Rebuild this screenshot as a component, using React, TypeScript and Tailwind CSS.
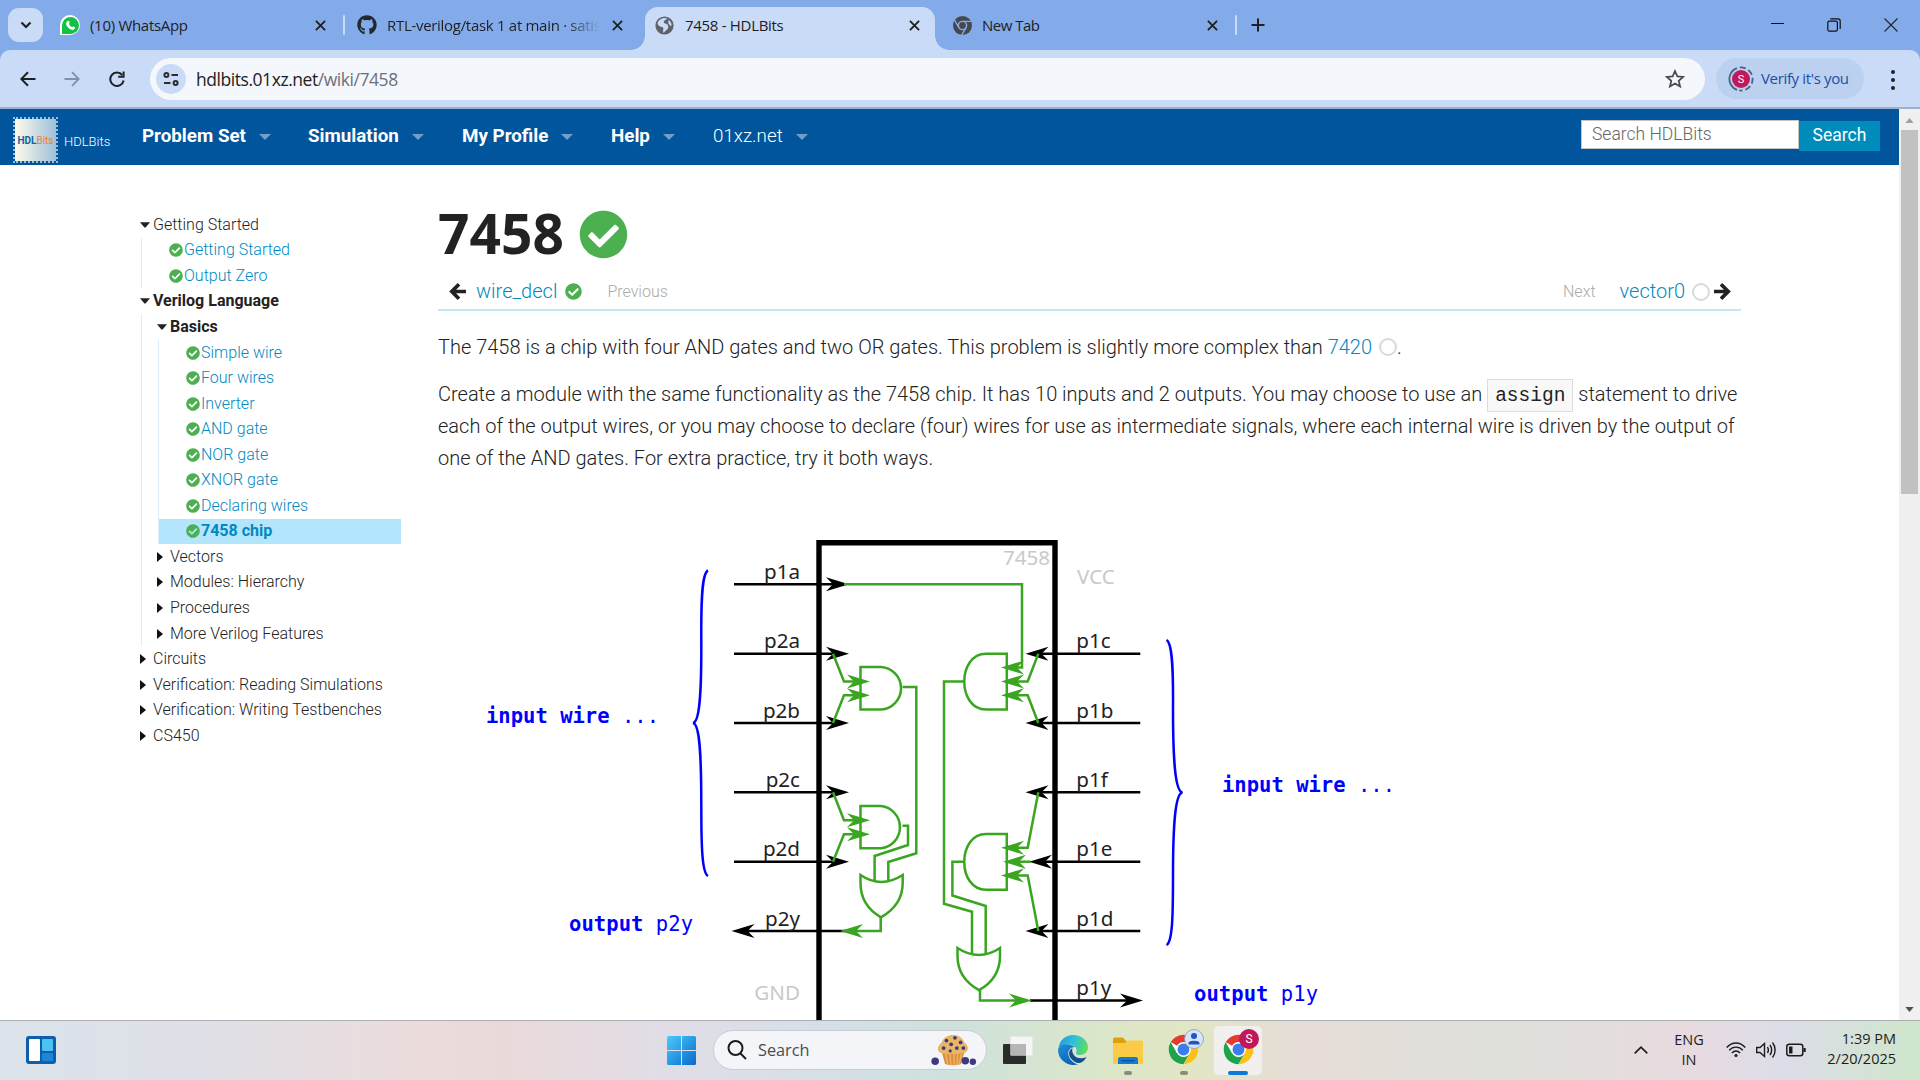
import React from "react";
import { FaCheckCircle, FaGithub, FaWhatsapp } from "react-icons/fa";

function Check({ className }: { className: string }) {
  return <FaCheckCircle className={"shrink-0 text-[#4caf50] " + className} />;
}

function CloseX({ className = "" }: { className?: string }) {
  return (
    <svg viewBox="0 0 12 12" className={"h-[11px] w-[11px] shrink-0 " + className} stroke="#1f2023" strokeWidth="2">
      <path d="M1 1 L11 11 M11 1 L1 11" />
    </svg>
  );
}

function ChromeMono() {
  return (
    <svg viewBox="0 0 24 24" className="h-[19px] w-[19px] shrink-0">
      <circle cx="12" cy="12" r="12" fill="#45484d" />
      <circle cx="12" cy="12" r="5.2" fill="none" stroke="#84abe9" strokeWidth="1.8" />
      <path d="M12 6.8 H23 M7.5 14.6 L2 5.2 M16.5 14.6 L11 24" stroke="#84abe9" strokeWidth="1.8" />
    </svg>
  );
}

function TabStrip() {
  return (
    <div className="flex h-[50px] shrink-0 bg-[#84abe9] text-[15px] text-[#1f2023]">
      <div className="mt-[8px] ml-[8px] flex h-[34px] w-[35px] items-center justify-center rounded-[11px] bg-[#c9dbf6]">
        <svg viewBox="0 0 12 8" className="h-[8px] w-[12px]" fill="none" stroke="#1f2023" strokeWidth="2.2">
          <path d="M1.5 1.5 L6 6 L10.5 1.5" />
        </svg>
      </div>
      <div className="ml-[17px] flex h-[50px] w-[283px] items-center">
        <div className="flex h-[20px] w-[20px] shrink-0 items-center justify-center rounded-full rounded-bl-[3px] bg-white">
          <div className="flex h-[17px] w-[17px] items-center justify-center rounded-full rounded-bl-[3px] bg-[#14c143]">
            <svg viewBox="0 0 12 12" className="h-[11px] w-[11px]" fill="#fff">
              <path d="M3.300 1 C3.800 0.700 4.300 0.900 4.500 1.400 L5 2.900 C5.200 3.500 4.300 4 4.400 4.400 C5 5.900 6 7 7.600 7.600 C8 7.700 8.400 6.800 9 7 L10.500 7.600 C11 7.800 11.200 8.300 11 8.800 C10.400 10.500 8.800 11.200 7.200 10.700 C4.500 9.800 2.200 7.500 1.300 4.800 C0.900 3.200 1.700 1.600 3.300 1 Z" />
            </svg>
          </div>
        </div>
        <span className="ml-[10px] tracking-[-0.3px]">(10) WhatsApp</span>
        <CloseX className="mr-[17px] ml-auto" />
      </div>
      <div className="mt-[15px] h-[20px] w-[2px] rounded bg-[#c9dbf6]" />
      <div className="flex h-[50px] w-[300px] items-center">
        <FaGithub className="ml-[12px] h-[20px] w-[20px] shrink-0 text-[#24292e]" />
        <div className="ml-[10px] w-[211px] overflow-hidden whitespace-nowrap [mask-image:linear-gradient(to_right,black_178px,transparent_213px)]">
          <span className="tracking-[-0.3px]">RTL-verilog/task 1 at main · satis</span>
        </div>
        <CloseX className="ml-[14px]" />
      </div>
      <div className="relative mt-[7px] flex h-[43px] w-[290px] items-center rounded-t-[13px] bg-[#c9dbf6] pb-[7px]">
        <div className="absolute bottom-0 left-[-14px] h-[14px] w-[14px] bg-[radial-gradient(circle_at_0_0,#84abe9_13.5px,#c9dbf6_14px)]" />
        <div className="absolute right-[-14px] bottom-0 h-[14px] w-[14px] bg-[radial-gradient(circle_at_100%_0,#84abe9_13.5px,#c9dbf6_14px)]" />
        <svg viewBox="0 0 24 24" className="ml-[10px] h-[19px] w-[19px] shrink-0">
          <circle cx="12" cy="12" r="11.5" fill="#5f6368" />
          <path d="M3.500 7.500 C7 2 13 1.500 15.500 3.500 C13 5 9.500 6.500 12 9 C15 9.500 18 11.500 16.500 15 C15.500 18 12 18.500 11 21.500 C9 18.500 12 16.500 9.500 14 C6.500 13.500 2.500 12 3.500 7.500 Z M17.500 5 C20.500 7 21.500 11 20.500 13 C18 11 15.500 9 17.500 5 Z" fill="#c9dbf6" />
        </svg>
        <span className="ml-[11px] tracking-[-0.3px]">7458 - HDLBits</span>
        <CloseX className="mr-[15px] ml-auto" />
      </div>
      <div className="flex h-[50px] w-[300px] items-center">
        <div className="ml-[18px]">
          <ChromeMono />
        </div>
        <span className="ml-[10px] tracking-[-0.5px]">New Tab</span>
        <CloseX className="mr-[17px] ml-auto" />
      </div>
      <div className="mt-[15px] h-[20px] w-[2px] rounded bg-[#c9dbf6]" />
      <svg viewBox="0 0 14 14" className="mt-[18px] ml-[14px] h-[14px] w-[14px]" stroke="#1f2023" strokeWidth="2">
        <path d="M7 0.5 V13.5 M0.5 7 H13.5" />
      </svg>
      <div className="mr-[22px] ml-auto flex h-[50px] items-center gap-[43px]">
        <svg viewBox="0 0 14 14" className="h-[14px] w-[14px]" stroke="#111" strokeWidth="1">
          <path d="M1 5.5 H14" />
        </svg>
        <svg viewBox="0 0 14 14" className="h-[14px] w-[14px]" fill="none" stroke="#111" strokeWidth="1.2">
          <rect x="0.8" y="3.2" width="9.6" height="10" rx="1.6" />
          <path d="M3.2 0.8 H11 C12.4 0.8 13.2 1.6 13.2 3 V11" />
        </svg>
        <svg viewBox="0 0 14 14" className="h-[14px] w-[14px]" stroke="#222" strokeWidth="1.1">
          <path d="M0.5 0.5 L13.5 13.5 M13.5 0.5 L0.5 13.5" />
        </svg>
      </div>
    </div>
  );
}

function Toolbar() {
  return (
    <div className="h-[57px] shrink-0 bg-[#84abe9]">
      <div className="flex h-[57px] rounded-t-[10px] bg-[#c9dbf6] pt-[8px]">
        <div className="flex h-[41px] w-[150px] items-center">
          <svg viewBox="0 0 16 16" className="ml-[20px] h-[16px] w-[16px]" fill="none" stroke="#1f2023" strokeWidth="2">
            <path d="M15.5 8 H1.5 M8 1.2 L1.3 8 L8 14.8" />
          </svg>
          <svg viewBox="0 0 16 16" className="ml-[28px] h-[16px] w-[16px]" fill="none" stroke="#8391a8" strokeWidth="1.8">
            <path d="M0.5 8 H14.5 M8 1.2 L14.7 8 L8 14.8" />
          </svg>
          <svg viewBox="0 0 16 16" className="ml-[29px] h-[16px] w-[16px]" fill="none" stroke="#1f2023" strokeWidth="2">
            <path d="M14.6 9.5 A6.7 6.7 0 1 1 13.2 4" />
            <path d="M14.6 0.6 V5.8 H9.2" />
          </svg>
        </div>
        <div className="flex h-[42px] w-[1555px] items-center rounded-full bg-[#f4f7fc]">
          <div className="ml-[6px] flex h-[30px] w-[30px] items-center justify-center rounded-full bg-[#c9dbf6]">
            <svg viewBox="0 0 16 14" className="h-[14px] w-[16px]" fill="none" stroke="#2b2d31" strokeWidth="2">
              <circle cx="3.4" cy="3" r="2" />
              <path d="M8.5 3 H15 M1 11 H7.5" />
              <circle cx="12.6" cy="11" r="2" />
            </svg>
          </div>
          <span className="ml-[10px] text-[17.5px] tracking-[-0.45px] text-[#1f2023]">
            hdlbits.01xz.net<span className="text-[#6b7077]">/wiki/7458</span>
          </span>
          <svg viewBox="0 0 20 20" className="mr-[20px] ml-auto h-[20px] w-[20px]" fill="none" stroke="#46494e" strokeWidth="1.7">
            <path d="M10 2 L12.3 7.4 L18.2 7.9 L13.7 11.8 L15.1 17.5 L10 14.4 L4.9 17.5 L6.3 11.8 L1.8 7.9 L7.7 7.4 Z" />
          </svg>
        </div>
        <div className="ml-[11px] flex h-[41px] w-[148px] items-center rounded-full bg-[#bcd0f0]">
          <svg viewBox="0 0 26 26" className="ml-[12px] h-[26px] w-[26px]">
            <circle cx="13" cy="13" r="11.6" fill="none" stroke="#4a6286" strokeWidth="1.8" strokeDasharray="28 3 6 3 6 3 6 3 6 3 3 3" transform="rotate(110 13 13)" />
            <circle cx="13" cy="13" r="9" fill="#c2185b" />
            <text x="13" y="17" textAnchor="middle" fontSize="11" fill="#fff" fontFamily="Roboto">S</text>
          </svg>
          <span className="ml-[7px] text-[15px] tracking-[-0.35px] whitespace-nowrap text-[#1d4fa3]">Verify it's you</span>
        </div>
        <div className="mt-[12px] ml-[27px] flex flex-col gap-[4px]">
          <div className="h-[4px] w-[4px] rounded-full bg-[#1f2023]" />
          <div className="h-[4px] w-[4px] rounded-full bg-[#1f2023]" />
          <div className="h-[4px] w-[4px] rounded-full bg-[#1f2023]" />
        </div>
      </div>
    </div>
  );
}

function Caret() {
  return (
    <svg viewBox="0 0 12 6" className="h-[6px] w-[12px] shrink-0" fill="#6f9fca">
      <path d="M0 0 H12 L6 6 Z" />
    </svg>
  );
}

function NavItem({ label, width, className }: { label: string; width: string; className: string }) {
  return (
    <div className={"flex items-center " + width}>
      <span className={"mr-[13px] whitespace-nowrap " + className}>{label}</span>
      <Caret />
    </div>
  );
}

function SiteNav() {
  return (
    <div className="flex h-[56px] shrink-0 bg-[#00559c] font-[Roboto] text-white">
      <div className="mt-[8px] ml-[13px] flex h-[46px] w-[45px] shrink-0 items-center justify-center border-2 border-dotted border-[#9dbbd3] bg-[linear-gradient(to_right,#fdfbea,#9fc0da)] bg-clip-padding text-[10px] font-bold">
        <span className="text-[#14639d]">HDL</span>
        <span className="font-normal text-[#e8822c]">Bits</span>
      </div>
      <span className="mt-[22px] ml-[6px] w-[78px] shrink-0 text-[13px] leading-[21px] font-light">HDLBits</span>
      <div className="flex h-[55px] items-center">
        <NavItem label="Problem Set" width="w-[166px]" className="text-[18.8px] font-bold" />
        <NavItem label="Simulation" width="w-[154px]" className="text-[18.8px] font-bold" />
        <NavItem label="My Profile" width="w-[149px]" className="text-[18.8px] font-bold" />
        <NavItem label="Help" width="w-[102px]" className="text-[18.8px] font-bold" />
        <NavItem label="01xz.net" width="w-[120px]" className="text-[18.8px] font-light" />
      </div>
      <div className="mt-[11px] mr-[19px] ml-auto flex">
        <div className="flex h-[29px] w-[218px] items-center border border-[#c4c4c4] bg-white pl-[10px] text-[17.5px] font-light text-[#666]">
          Search HDLBits
        </div>
        <div className="mt-px flex h-[30px] w-[81px] items-center justify-center bg-[#008cba] pb-[2px] text-[17.5px]">
          Search
        </div>
      </div>
    </div>
  );
}

function Down() {
  return (
    <svg viewBox="0 0 10 6" className="mr-[3px] ml-px h-[6px] w-[10px] shrink-0" fill="#222">
      <path d="M0 0.3 H10 L5.6 5.5 H4.4 Z" />
    </svg>
  );
}

function Right() {
  return (
    <svg viewBox="0 0 6 10" className="mr-[7px] h-[10px] w-[6px] shrink-0" fill="#111">
      <path d="M0 0 L6 5 L0 10 Z" />
    </svg>
  );
}

const row = "flex h-[25.55px] items-center whitespace-nowrap ";

function Leaf({ label, active = false }: { label: string; active?: boolean }) {
  return (
    <div className={row + (active ? "bg-[#b3e5fc] font-bold text-[#0288bf]" : "text-[#0288bf]")}>
      <Check className="mr-px ml-[27px] h-[14px] w-[14px]" />
      {label}
    </div>
  );
}

const basics = ["Simple wire", "Four wires", "Inverter", "AND gate", "NOR gate", "XNOR gate", "Declaring wires"];
const verilogGroups = ["Vectors", "Modules: Hierarchy", "Procedures", "More Verilog Features"];
const topGroups = ["Circuits", "Verification: Reading Simulations", "Verification: Writing Testbenches", "CS450"];

function Sidebar() {
  return (
    <div className="mt-[47px] ml-[139px] w-[262px] shrink-0 font-[Roboto] text-[16px] font-light text-[#222]">
      <div className={row}>
        <Down />
        Getting Started
      </div>
      <div className="ml-[2px] border-l border-[#d8effa]">
        <Leaf label="Getting Started" />
        <Leaf label="Output Zero" />
      </div>
      <div className={row + "font-bold"}>
        <Down />
        Verilog Language
      </div>
      <div className="ml-[2px] border-l border-[#d8effa]">
        <div className={row + "pl-[14px] font-bold"}>
          <Down />
          Basics
        </div>
        <div className="ml-[16px] border-l border-[#d8effa]">
          {basics.map((b) => (
            <Leaf key={b} label={b} />
          ))}
          <Leaf label="7458 chip" active />
        </div>
        {verilogGroups.map((g) => (
          <div key={g} className={row + "pl-[15px]"}>
            <Right />
            {g}
          </div>
        ))}
      </div>
      {topGroups.map((g) => (
        <div key={g} className={row + "pl-px"}>
          <Right />
          {g}
        </div>
      ))}
    </div>
  );
}

type Pt = [number, number];

function Head({ tip, dir, fill }: { tip: Pt; dir: 1 | -1; fill: string }) {
  const [x, y] = tip;
  const b = x - 23 * dir;
  return <path d={`M${x} ${y} L${b} ${y - 7} L${b + 7 * dir} ${y} L${b} ${y + 7} Z`} fill={fill} />;
}

const G = "#3aa520";
const leftPins: [string, number][] = [["p1a", 584.3], ["p2a", 653.7], ["p2b", 723], ["p2c", 792.3], ["p2d", 861.7]];
const rightPins: [string, number, number][] = [["p1c", 653.7, 1025.5], ["p1b", 723, 1025.5], ["p1f", 792.3, 1025.5], ["p1e", 861.7, 1029], ["p1d", 931, 1025.5]];
const greenHeads: [number, number, 1 | -1][] = [
  [870, 681.5, 1], [870, 695.3, 1], [870, 820.3, 1], [870, 834.2, 1],
  [1001, 667.5, -1], [1001, 681.5, -1], [1001, 695.3, -1],
  [1001, 847.8, -1], [1003, 861.7, -1], [1001, 875.5, -1],
  [840, 931, -1], [1032, 1000.5, 1],
];
const greenPaths = [
  "M844 584.3 H1022 V667.5 H1012",
  "M833 653.7 L844 681.5 H856", "M833 723 L844 695.3 H856",
  "M833 792.3 L844 820.3 H856", "M833 861.7 L844 834.2 H856",
  "M860.5 667 H881 A21.5 21.3 0 0 1 881 709.5 H860.5 Z",
  "M860.5 806 H881 A21.5 21.3 0 0 1 881 848.3 H860.5 Z",
  "M902.5 687 H916.3 V853.3 L888.3 862 V881",
  "M902.5 825.7 H908 V845 L874.6 856 V881",
  "M860.5 875 Q881 889 902.7 875 V883 C902.7 900 892 911 881 917.3 C870 911 860.5 900 860.5 883 Z",
  "M880.7 917 V931 H852",
  "M1006.8 653.7 H986 C957 653.7 957 709.5 986 709.5 H1006.8 Z",
  "M1006.8 834 H986 C957 834 957 889.8 986 889.8 H1006.8 Z",
  "M964.3 681.5 H944 V903.7 L972 911.8 V954",
  "M964.3 861.7 H952.4 V895.5 L985.7 906 V954",
  "M957.5 948 Q979 962 1000 948 V956 C1000 973 990 984 979 990.2 C968 984 957.5 973 957.5 956 Z",
  "M980 990 V1000.5 H1020",
  "M1038.3 653.7 L1027.7 681.5 H1012", "M1038.3 723 L1027.7 695.3 H1012",
  "M1038.3 792.3 L1027.7 847.8 H1012", "M1038.3 931 L1027.7 875.5 H1012", "M1031 861.7 H1016",
];

function ChipDiagram() {
  return (
    <svg viewBox="438 530 1303 490" className="mt-[56px] block h-[490px] w-[1303px] shrink-0 font-normal">
      <path d="M819 1030 V542.7 H1055 V1030" fill="none" stroke="#000" strokeWidth="5.4" />
      <g stroke="#000" strokeWidth="2.6">
        {leftPins.map(([n, y]) => <path key={n} d={`M734 ${y} H835`} />)}
        {rightPins.map(([n, y, t]) => <path key={n} d={`M1140.3 ${y} H${t + 12}`} />)}
        <path d="M745 931 H848 M1030 1000.5 H1130" />
      </g>
      {leftPins.map(([n, y]) => <Head key={n} tip={[849, y]} dir={1} fill="#000" />)}
      {rightPins.map(([n, y, t]) => <Head key={n} tip={[t, y]} dir={-1} fill="#000" />)}
      <Head tip={[731.5, 931]} dir={-1} fill="#000" />
      <Head tip={[1143, 1000.5]} dir={1} fill="#000" />
      <g fill="none" stroke={G} strokeWidth="2.5">
        {greenPaths.map((d) => <path key={d} d={d} />)}
      </g>
      {greenHeads.map(([x, y, d]) => <Head key={`${x}-${y}`} tip={[x, y]} dir={d} fill={G} />)}
      <g fontFamily="Noto Sans" fontSize="20.6" fill="#222">
        {leftPins.map(([n, y]) => <text key={n} x="800" y={y - 5.3} textAnchor="end">{n}</text>)}
        {rightPins.map(([n, y]) => <text key={n} x="1076.3" y={y - 5.3}>{n}</text>)}
        <text x="800" y="925.7" textAnchor="end">p2y</text>
        <text x="1076.3" y="995.2">p1y</text>
      </g>
      <g fontFamily="Noto Sans" fontSize="20.6" fill="#c9c9c9">
        <text x="1050" y="565" textAnchor="end">7458</text>
        <text x="1077" y="584.3">VCC</text>
        <text x="800" y="1000.3" textAnchor="end">GND</text>
      </g>
      <g fontFamily="DejaVu Sans Mono" fontSize="20.5" fill="#00f" className="whitespace-pre">
        <text x="486" y="723" textLength="173"><tspan fontWeight="bold">input wire</tspan> ...</text>
        <text x="569" y="931" textLength="124"><tspan fontWeight="bold">output</tspan> p2y</text>
        <text x="1222" y="792.3" textLength="173"><tspan fontWeight="bold">input wire</tspan> ...</text>
        <text x="1194" y="1000.5" textLength="124"><tspan fontWeight="bold">output</tspan> p1y</text>
      </g>
      <g fill="none" stroke="#00f" strokeWidth="2.5">
        <path d="M708 570.5 C702 573 701 600 701.3 640 C701.5 690 700 722 693 723 C700 724 701.3 757 701.3 806 C701.3 846 702 873 708 876" />
        <path d="M1166.5 640 C1172.5 643 1173.3 670 1173 709 C1173 759 1175 791.5 1182.5 792.5 C1175 793.5 1173 826 1173 876 C1173 916 1172.5 942 1166.5 945" />
      </g>
    </svg>
  );
}

function Ring({ className = "" }: { className?: string }) {
  return <span className={"inline-block h-[18px] w-[18px] shrink-0 rounded-full border-2 border-[#dadada] " + className} />;
}

function BoldArrow({ className }: { className: string }) {
  return (
    <svg viewBox="0 0 17 17" className={"h-[17px] w-[17px] shrink-0 " + className} fill="none" stroke="#222" strokeWidth="3.700">
      <path d="M17 8.500 H3 M10 1.300 L2.800 8.500 L10 15.700" />
    </svg>
  );
}

function Article() {
  return (
    <div className="ml-[37px] flex w-[1303px] flex-col font-[Roboto] text-[20px] leading-[32px] font-light text-[#222]">
      <div className="mt-[29px] flex h-[80px] items-center">
        <h1 className="pb-[2px] font-['Noto_Sans'] text-[55px] font-bold">7458</h1>
        <Check className="ml-[15px] h-[49px] w-[49px]" />
      </div>
      <div className="flex h-[37px] shrink-0 items-center border-b-2 border-[#c3e8f2]">
        <BoldArrow className="ml-[11px]" />
        <span className="-mt-[2px] ml-[10px] text-[#0288bf]">wire_decl</span>
        <Check className="ml-[8px] h-[17px] w-[17px]" />
        <span className="ml-[25px] text-[16px] text-[#aaa]">Previous</span>
        <span className="mr-[24px] ml-auto text-[16px] text-[#aaa]">Next</span>
        <span className="-mt-[2px] text-[#0288bf]">vector0</span>
        <Ring className="ml-[7px]" />
        <BoldArrow className="mr-[10px] ml-[4px] rotate-180" />
      </div>
      <p className="mt-[20px] flex items-center whitespace-pre">
        <span>The 7458 is a chip with four AND gates and two OR gates. This problem is slightly more complex than <span className="text-[#0288bf]">7420</span></span>
        <Ring className="ml-[7px]" />.
      </p>
      <div className="mt-[15px] whitespace-nowrap">
        <p className="h-[32px]">
          Create a module with the same functionality as the 7458 chip. It has 10 inputs and 2 outputs. You may choose to use an{" "}
          <code className="border border-[#dcdcdc] bg-[#f8f8f8] px-[7px] pt-[5px] pb-[4px] font-['Liberation_Mono'] text-[19.5px] font-light text-[#222]">assign</code> statement to drive
        </p>
        <p>each of the output wires, or you may choose to declare (four) wires for use as intermediate signals, where each internal wire is driven by the output of</p>
        <p>one of the AND gates. For extra practice, try it both ways.</p>
      </div>
      <ChipDiagram />
    </div>
  );
}

function Scrollbar() {
  return (
    <div className="ml-auto flex w-[21px] shrink-0 flex-col items-center bg-[#f0f0f0]">
      <svg viewBox="0 0 10 6" className="mt-[9px] h-[5px] w-[9px]" fill="#a0a0a0"><path d="M0 6 L5 0 L10 6 Z" /></svg>
      <div className="mt-[7px] h-[364px] w-[17px] bg-[#c1c1c1]" />
      <svg viewBox="0 0 10 6" className="mt-auto mb-[8px] h-[5px] w-[9px]" fill="#505050"><path d="M0 0 L5 6 L10 0 Z" /></svg>
    </div>
  );
}

function Chrome() {
  return (
    <svg viewBox="0 0 48 48" className="h-[31px] w-[31px] shrink-0">
      <circle cx="24" cy="24" r="23" fill="#fff" />
      <path d="M24 24 L4.1 12.5 A23 23 0 0 1 43.9 12.5 H24 Z" fill="#e33b2e" />
      <path d="M4.1 12.5 A23 23 0 0 0 24 47 L34 29.7 L24 24 L14 29.7 Z" fill="#1fa34a" />
      <path d="M43.9 12.5 A23 23 0 0 1 24 47 L34 29.7 L33.9 18.2 L24 12.5 Z" fill="#fbc116" />
      <circle cx="24" cy="24" r="11.5" fill="#fff" />
      <circle cx="24" cy="24" r="9.2" fill="#3b7ded" />
    </svg>
  );
}

function Muffin() {
  return (
    <svg viewBox="0 0 48 34" className="h-[32px] w-[48px]">
      <path d="M11 19 H35 L31.5 32 Q23 34.5 14.5 32 Z" fill="#d9903f" />
      <path d="M15 21 L17.5 32 M19.5 21 L21 33 M24 21 V33 M28 21 L27 33 M32 21 L29.5 32" stroke="#f0b76a" strokeWidth="1.4" />
      <path d="M8 19 C5 14 9 11 11 9 C13 3 18 1 23 1 C29 1 33 4 35 9 C39 12 40 16 37 19 C33 22 13 22 8 19 Z" fill="#e9b566" />
      <g fill="#3e3a80">
        <circle cx="16" cy="7" r="2" /><circle cx="25" cy="4" r="2" /><circle cx="31" cy="9" r="2" /><circle cx="21" cy="11" r="2" />
        <circle cx="13" cy="15" r="2" /><circle cx="27" cy="15" r="2" /><circle cx="34" cy="15" r="2" /><circle cx="20" cy="18" r="1.7" />
        <circle cx="4" cy="29" r="4" /><circle cx="36" cy="28.5" r="4" /><circle cx="44" cy="29.5" r="3.4" />
      </g>
    </svg>
  );
}

function Taskbar() {
  return (
    <div className="flex h-[60px] shrink-0 border-t border-[#adaeb1] bg-[linear-gradient(to_right,#dbe3ea_0%,#dfe0e8_10%,#ecdcdc_22%,#ead9d9_26%,#e2dde6_34%,#d5dfe8_43%,#cde2dd_49%,#dce7c8_58%,#e2e6c4_62%,#e6dcd8_68%,#dfe0da_78%,#e8dbe0_88%,#dcdde8_93%,#cfe6cb_100%)] text-[15px] text-[#1d1d1d]">
      <svg viewBox="0 0 30 28" className="mt-[15px] ml-[26px] h-[28px] w-[30px] shrink-0">
        <rect width="30" height="28" rx="3" fill="#0f5ea8" />
        <rect x="3" y="3" width="11" height="22" rx="1" fill="#fff" />
        <rect x="16" y="3" width="11" height="12" rx="1" fill="#4cc2f5" />
        <rect x="16" y="17" width="11" height="8" rx="1" fill="#1c86d8" />
      </svg>
      <svg viewBox="0 0 29 29" className="mt-[15px] ml-[611px] h-[29px] w-[29px] shrink-0">
        <defs>
          <linearGradient id="win" gradientUnits="userSpaceOnUse" x1="0" y1="0" x2="29" y2="29">
            <stop offset="0" stopColor="#4ccbfb" /><stop offset="1" stopColor="#0669cd" />
          </linearGradient>
        </defs>
        <path d="M1.5 0 H14 V14 H0 V1.5 Q0 0 1.5 0 Z M15 0 H27.500 Q29 0 29 1.500 V14 H15 Z M0 15 H14 V29 H1.500 Q0 29 0 27.500 Z M15 15 H29 V27.500 Q29 29 27.500 29 H15 Z" fill="url(#win)" />
      </svg>
      <div className="mt-[9px] ml-[17px] flex h-[40px] w-[274px] shrink-0 items-center rounded-full border border-[#c8cdd2] bg-[#f3f5f8]">
        <svg viewBox="0 0 20 20" className="ml-[13px] h-[20px] w-[20px]" fill="none" stroke="#1d1d1d" strokeWidth="2">
          <circle cx="8.500" cy="8" r="7" />
          <path d="M13 13 L19 19" />
        </svg>
        <span className="ml-[11px] text-[16.3px] text-[#4c4c4c]">Search</span>
        <div className="mr-[8px] ml-auto"><Muffin /></div>
      </div>
      <svg viewBox="0 0 30 29" className="mt-[15px] ml-[16px] h-[29px] w-[30px] shrink-0">
        <rect x="0" y="8" width="23" height="20" rx="1" fill="#2b2b2b" />
        <rect x="7.500" y="0.500" width="22" height="19" rx="1" fill="#f6f6f6" opacity="0.95" />
        <rect x="7.500" y="8" width="15.500" height="11.500" fill="#b5b5b5" />
      </svg>
      <svg viewBox="0 0 30 30" className="mt-[14px] ml-[25px] h-[30px] w-[30px] shrink-0">
        <defs>
          <linearGradient id="eg" x1="0" y1="0.300" x2="1" y2="0.500">
            <stop offset="0" stopColor="#1f9be0" /><stop offset="0.500" stopColor="#2fc1d8" /><stop offset="1" stopColor="#62dd5a" />
          </linearGradient>
          <linearGradient id="eb" x1="0" y1="0" x2="0.600" y2="1">
            <stop offset="0" stopColor="#1d8fdd" /><stop offset="1" stopColor="#0c63b4" />
          </linearGradient>
        </defs>
        <path d="M0.500 13 C1.500 5 8 0 15 0 C24 0 30 6 30 12.500 C30 17 26.500 20 22 20 C18.500 20 17.500 18.500 18.300 17 C19.500 14 17 10 12 9.500 C6 9 2 11 0.500 13 Z" fill="url(#eg)" />
        <path d="M0.300 13.500 C2 10 7 8.500 11 9.500 C15 10.300 17 12 17 12 C12 12 9.500 16 10.500 20.500 C12 26 17 29 20 29.300 C17 30.500 12 30.200 8 28 C2 24.500 -0.500 19 0.300 13.500 Z" fill="url(#eb)" />
        <path d="M14.500 13 C11 15 10 19 12.500 23 C15 26.500 19 28.500 22 28 C25 27 27.500 24.500 28.500 22 C24 24.500 18 23.500 15.500 19.500 C14 17 14 15 14.500 13 Z" fill="#14508f" />
      </svg>
      <div className="mt-[16px] ml-[25px] flex w-[30px] shrink-0 flex-col items-center">
        <svg viewBox="0 0 30 28" className="h-[28px] w-[30px]">
          <path d="M0 2 Q0 0.500 1.500 0.500 H10 L13 4 H28.500 Q30 4 30 5.500 V12 H0 Z" fill="#e2a007" />
          <path d="M0 6 H12 L14.500 3.500 H28.500 Q30 3.500 30 5 V27 H0 Z" fill="#fccb45" />
          <path d="M5 27 V22 Q5 20 7 20 H23 Q25 20 25 22 V27 Z" fill="#0f7dd4" />
          <path d="M8.500 23.700 H21.500" stroke="#0a4f8c" strokeWidth="1.200" />
        </svg>
        <div className="mt-[6px] h-[4px] w-[8px] rounded-full bg-[#8b8b80]" />
      </div>
      <div className="relative mt-[13px] ml-[25px] flex w-[31px] shrink-0 flex-col items-center">
        <Chrome />
        <div className="mt-[6px] h-[4px] w-[8px] rounded-full bg-[#8b8b80]" />
        <svg viewBox="0 0 20 20" className="absolute top-[-5px] left-[16px] h-[20px] w-[20px]">
          <circle cx="10" cy="10" r="9.500" fill="#d6e3fb" stroke="#8d99ad" strokeWidth="0.800" />
          <circle cx="10" cy="7" r="3" fill="#1a56c4" />
          <path d="M4.500 15.500 V14 C4.500 11 15.500 11 15.500 14 V15.500 Z" fill="#1a56c4" />
        </svg>
      </div>
      <div className="relative mt-[5px] ml-[15px] flex h-[49px] w-[48px] shrink-0 flex-col items-center rounded-[5px] bg-[#f2f0ef] pt-[8px]">
        <Chrome />
        <div className="mt-[6px] h-[4px] w-[20px] shrink-0 rounded-full bg-[#0f78d4]" />
        <div className="absolute top-[3px] left-[25px] flex h-[20px] w-[20px] items-center justify-center rounded-full bg-[#c2185b] font-[Roboto] text-[12px] text-white">S</div>
      </div>
      <div className="mr-[24px] ml-auto flex h-[57px] items-center">
        <svg viewBox="0 0 14 8" className="h-[8px] w-[14px]" fill="none" stroke="#1d1d1d" strokeWidth="1.700"><path d="M0.700 7.300 L7 1.200 L13.300 7.300" /></svg>
        <div className="ml-[26px] w-[30px] text-center text-[14.5px] leading-[20px]">ENG<br />IN</div>
        <svg viewBox="0 0 20 16" className="ml-[22px] h-[16px] w-[20px]" fill="none" stroke="#1d1d1d" strokeWidth="1.400">
          <path d="M0.700 5.500 C6 -0.500 14 -0.500 19.300 5.500 M3.200 8.300 C7 4 13 4 16.800 8.300 M5.900 11 C8.500 8.300 11.500 8.300 14.100 11" />
          <circle cx="10" cy="13.500" r="1.600" fill="#1d1d1d" stroke="none" />
        </svg>
        <svg viewBox="0 0 20 18" className="ml-[10px] h-[18px] w-[20px]" fill="none" stroke="#1d1d1d" strokeWidth="1.400">
          <path d="M0.700 6.500 H4 L8.500 2.500 V15.500 L4 11.500 H0.700 Z M11.500 6 C12.700 8 12.700 10 11.500 12 M14 4 C16 7 16 11 14 14 M16.500 1.500 C20 6 20 12 16.500 16.500" />
        </svg>
        <svg viewBox="0 0 20 14" className="ml-[10px] h-[14px] w-[20px]" fill="none" stroke="#1d1d1d" strokeWidth="1.500">
          <rect x="0.800" y="1.300" width="16" height="11.400" rx="2.500" />
          <rect x="3" y="3.500" width="3.500" height="7" fill="#1d1d1d" stroke="none" />
          <path d="M18.600 5 V9" strokeWidth="2.200" />
        </svg>
        <div className="mb-[2px] ml-[20px] flex w-[70px] flex-col items-end text-[14.500px] leading-[20px] whitespace-nowrap">
          <span>1:39 PM</span>
          <span>2/20/2025</span>
        </div>
      </div>
    </div>
  );
}

export default function App() {
  return (
    <div className="flex h-[1080px] w-[1920px] flex-col overflow-hidden bg-white font-['Open_Sans',sans-serif]">
      <TabStrip />
      <Toolbar />
      <div className="h-[2px] shrink-0 bg-[#9db1cf]" />
      <div className="flex h-[911px] shrink-0">
        <div className="flex w-[1899px] flex-col overflow-hidden">
          <SiteNav />
          <div className="flex h-[855px]">
            <Sidebar />
            <Article />
          </div>
        </div>
        <Scrollbar />
      </div>
      <Taskbar />
    </div>
  );
}
